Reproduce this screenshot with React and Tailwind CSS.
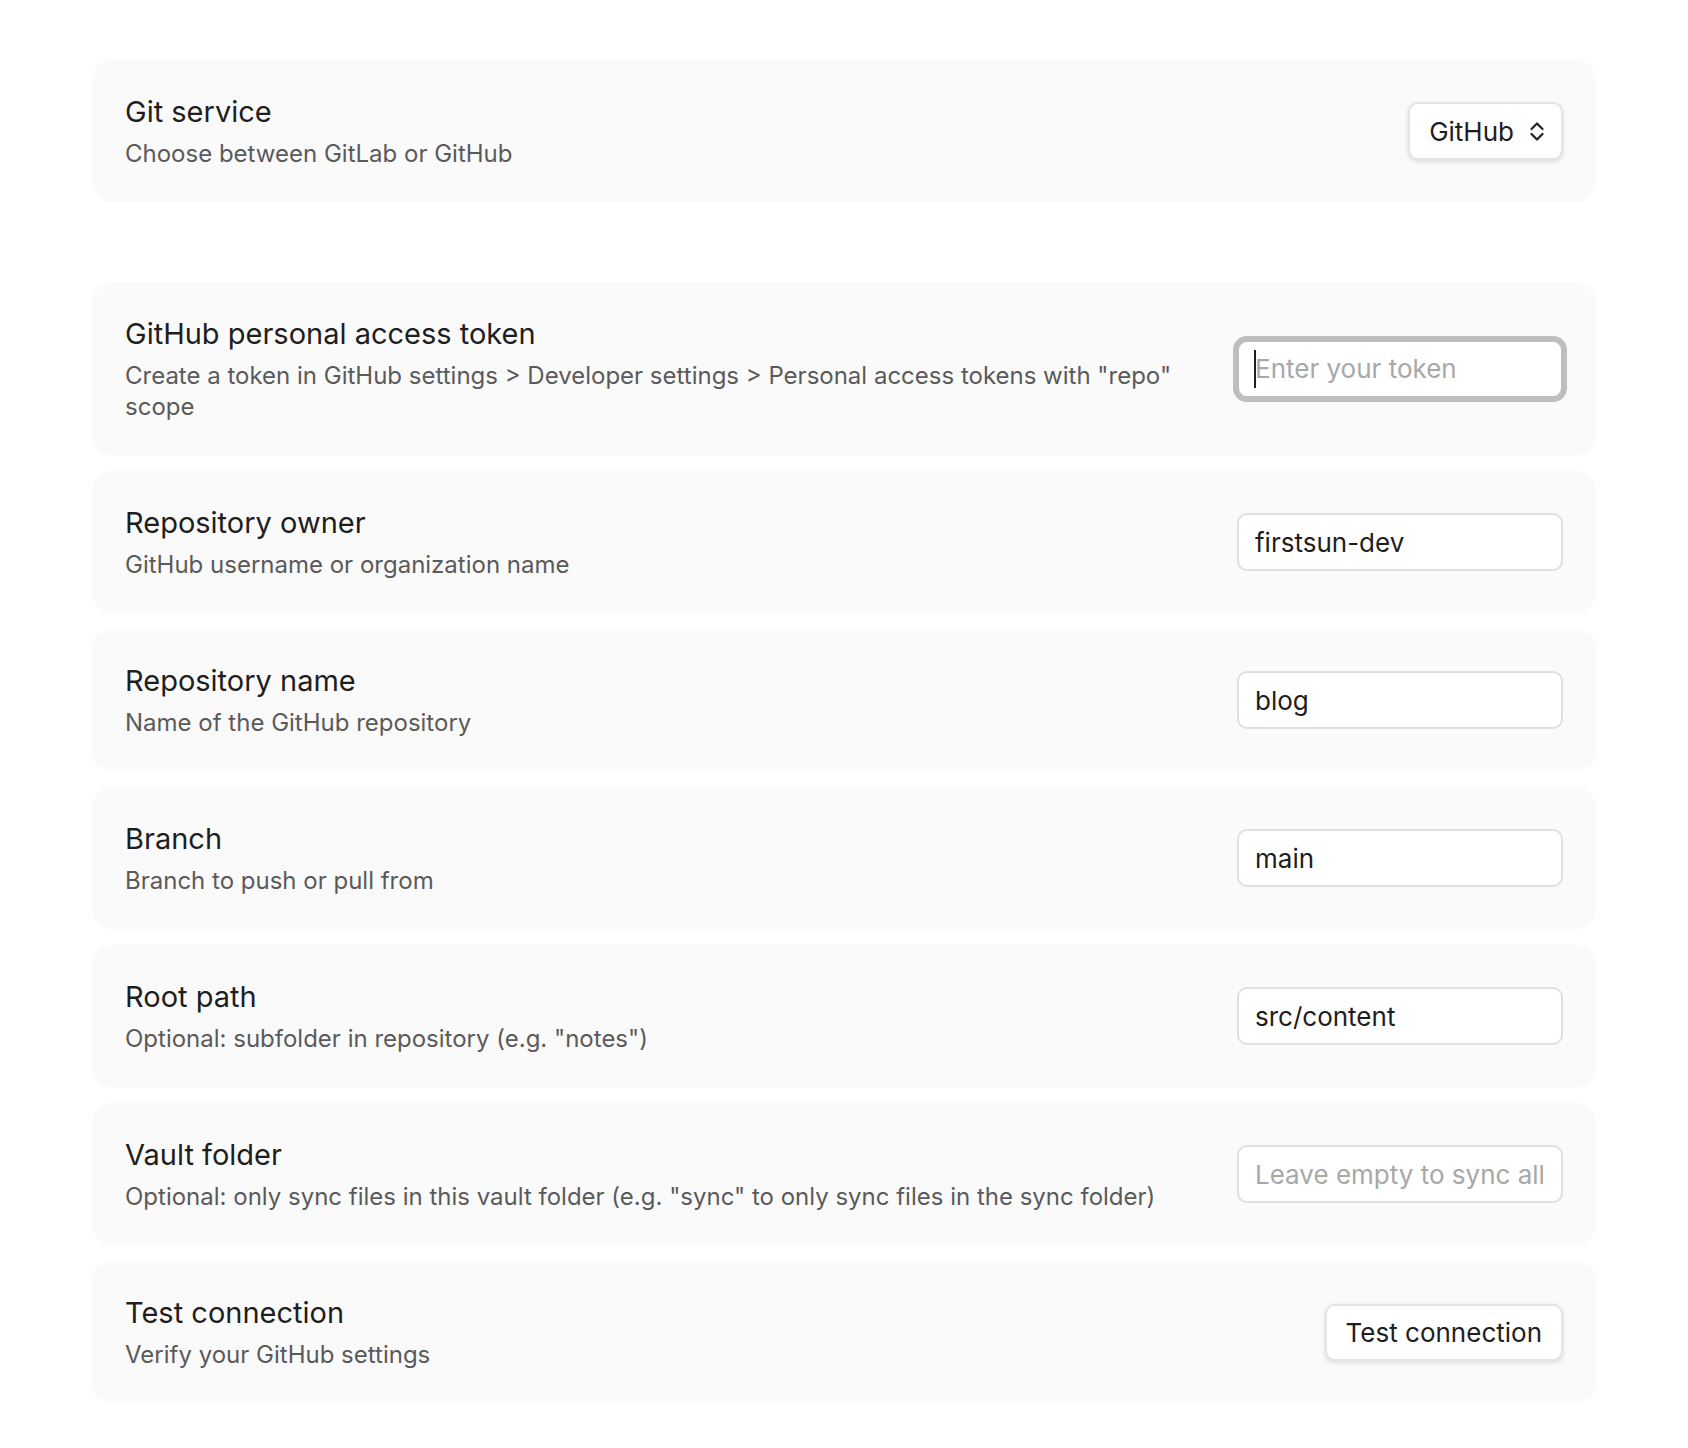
import { useState } from "react"

const font = { fontFamily: "Inter, 'Noto Sans', sans-serif" }

function ChevronsUpDownIcon() {
  return (
    <svg width="14" height="19" viewBox="0 0 14 19" fill="none" stroke="#222222" strokeWidth="2.2" strokeLinecap="round" strokeLinejoin="round">
      <path d="M1.5 7 L7 1.5 L12.5 7" />
      <path d="M1.5 12 L7 17.5 L12.5 12" />
    </svg>
  )
}

function SettingItem({ name, desc, children, className = "" }) {
  return (
    <div className={`flex items-center rounded-[20px] bg-[#fafafa] px-[33px] py-[33px] ${className}`}>
      <div className="flex-1 pr-[40px]">
        <div className="text-[29px] leading-[38px] text-[#1e1e1e]">{name}</div>
        <div className="mt-[7px] text-[24px] leading-[31px] text-[#5a5a5a]">{desc}</div>
      </div>
      <div className="flex shrink-0 items-center justify-end">{children}</div>
    </div>
  )
}

function TextField({ value, placeholder, onChange }) {
  return (
    <input
      type="text"
      value={value}
      placeholder={placeholder}
      onChange={onChange}
      className="h-[58px] w-[326px] rounded-[10px] border-2 border-[#e0e0e0] bg-white px-[16px] text-[26px] text-[#1e1e1e] outline-none placeholder:text-[#a8a8a8]"
      style={font}
    />
  )
}

export default function App() {
  const [values, setValues] = useState({
    token: "",
    owner: "firstsun-dev",
    repo: "blog",
    branch: "main",
    root: "src/content",
    vault: "",
  })

  const update = (key) => (e) => setValues({ ...values, [key]: e.target.value })

  return (
    <div className="min-h-screen bg-white px-[92px] pt-[60px] pb-10" style={font}>
      {/* Service picker */}
      <SettingItem name="Git service" desc="Choose between GitLab or GitHub" className="mb-[80px]">
        <button className="flex h-[58px] items-center gap-[16px] rounded-[10px] border-2 border-[#e4e4e4] bg-white pl-[19px] pr-[17px] text-[26px] text-[#1e1e1e] shadow-[0_2px_5px_rgba(0,0,0,0.12)]">
          <span>GitHub</span>
          <ChevronsUpDownIcon />
        </button>
      </SettingItem>

      <div className="flex flex-col gap-4">
        <SettingItem
          name="GitHub personal access token"
          desc={'Create a token in GitHub settings > Developer settings > Personal access tokens with "repo" scope'}
        >
          <div className="relative">
            <input
              type="text"
              value={values.token}
              placeholder="Enter your token"
              onChange={update("token")}
              className="h-[58px] w-[326px] rounded-[10px] border-2 border-[#bebebe] bg-white px-[16px] text-[26px] text-[#1e1e1e] shadow-[0_0_0_4px_#bebebe] outline-none placeholder:text-[#a8a8a8]"
              style={font}
            />
            {values.token === "" && (
              <span className="pointer-events-none absolute left-[17px] top-[10px] h-[38px] w-[2px] bg-[#1e1e1e]" />
            )}
          </div>
        </SettingItem>

        <SettingItem name="Repository owner" desc="GitHub username or organization name">
          <TextField value={values.owner} onChange={update("owner")} />
        </SettingItem>

        <SettingItem name="Repository name" desc="Name of the GitHub repository">
          <TextField value={values.repo} onChange={update("repo")} />
        </SettingItem>

        <SettingItem name="Branch" desc="Branch to push or pull from">
          <TextField value={values.branch} onChange={update("branch")} />
        </SettingItem>

        <SettingItem name="Root path" desc={'Optional: subfolder in repository (e.g. "notes")'}>
          <TextField value={values.root} onChange={update("root")} />
        </SettingItem>

        <SettingItem
          name="Vault folder"
          desc={'Optional: only sync files in this vault folder (e.g. "sync" to only sync files in the sync folder)'}
        >
          <TextField value={values.vault} placeholder="Leave empty to sync all files" onChange={update("vault")} />
        </SettingItem>

        <SettingItem name="Test connection" desc="Verify your GitHub settings">
          <button className="h-[57px] rounded-[10px] border-2 border-[#e4e4e4] bg-white px-[19px] text-[26px] text-[#1e1e1e] shadow-[0_2px_5px_rgba(0,0,0,0.12)]">
            Test connection
          </button>
        </SettingItem>
      </div>
    </div>
  )
}
